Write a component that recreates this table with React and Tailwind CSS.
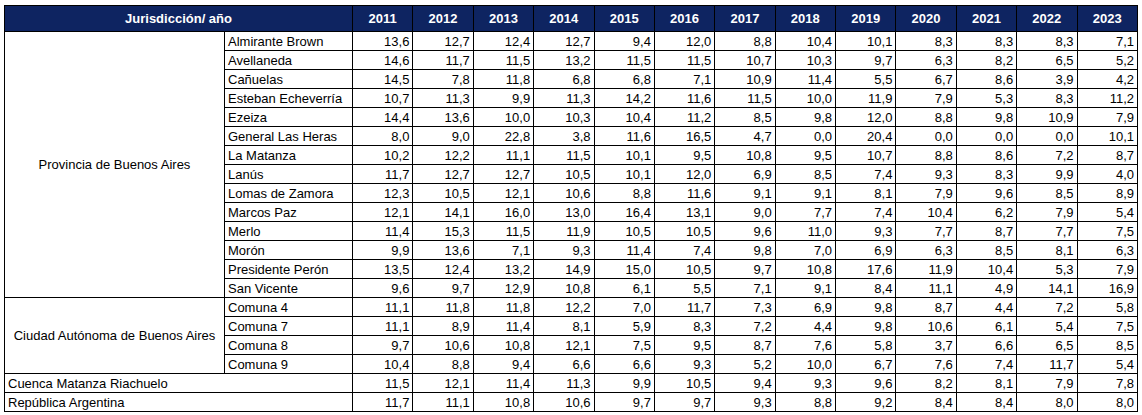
import React from "react";

const years = ["2011", "2012", "2013", "2014", "2015", "2016", "2017", "2018", "2019", "2020", "2021", "2022", "2023"];

const provincia = [
  ["Almirante Brown", "13,6 12,7 12,4 12,7 9,4 12,0 8,8 10,4 10,1 8,3 8,3 8,3 7,1"],
  ["Avellaneda", "14,6 11,7 11,5 13,2 11,5 11,5 10,7 10,3 9,7 6,3 8,2 6,5 5,2"],
  ["Cañuelas", "14,5 7,8 11,8 6,8 6,8 7,1 10,9 11,4 5,5 6,7 8,6 3,9 4,2"],
  ["Esteban Echeverría", "10,7 11,3 9,9 11,3 14,2 11,6 11,5 10,0 11,9 7,9 5,3 8,3 11,2"],
  ["Ezeiza", "14,4 13,6 10,0 10,3 10,4 11,2 8,5 9,8 12,0 8,8 9,8 10,9 7,9"],
  ["General Las Heras", "8,0 9,0 22,8 3,8 11,6 16,5 4,7 0,0 20,4 0,0 0,0 0,0 10,1"],
  ["La Matanza", "10,2 12,2 11,1 11,5 10,1 9,5 10,8 9,5 10,7 8,8 8,6 7,2 8,7"],
  ["Lanús", "11,7 12,7 12,7 10,5 10,1 12,0 6,9 8,5 7,4 9,3 8,3 9,9 4,0"],
  ["Lomas de Zamora", "12,3 10,5 12,1 10,6 8,8 11,6 9,1 9,1 8,1 7,9 9,6 8,5 8,9"],
  ["Marcos Paz", "12,1 14,1 16,0 13,0 16,4 13,1 9,0 7,7 7,4 10,4 6,2 7,9 5,4"],
  ["Merlo", "11,4 15,3 11,5 11,9 10,5 10,5 9,6 11,0 9,3 7,7 8,7 7,7 7,5"],
  ["Morón", "9,9 13,6 7,1 9,3 11,4 7,4 9,8 7,0 6,9 6,3 8,5 8,1 6,3"],
  ["Presidente Perón", "13,5 12,4 13,2 14,9 15,0 10,5 9,7 10,8 17,6 11,9 10,4 5,3 7,9"],
  ["San Vicente", "9,6 9,7 12,9 10,8 6,1 5,5 7,1 9,1 8,4 11,1 4,9 14,1 16,9"],
];

const caba = [
  ["Comuna 4", "11,1 11,8 11,8 12,2 7,0 11,7 7,3 6,9 9,8 8,7 4,4 7,2 5,8"],
  ["Comuna 7", "11,1 8,9 11,4 8,1 5,9 8,3 7,2 4,4 9,8 10,6 6,1 5,4 7,5"],
  ["Comuna 8", "9,7 10,6 10,8 12,1 7,5 9,5 8,7 7,6 5,8 3,7 6,6 6,5 8,5"],
  ["Comuna 9", "10,4 8,8 9,4 6,6 6,6 9,3 5,2 10,0 6,7 7,6 7,4 11,7 5,4"],
];

const totals = [
  ["Cuenca Matanza Riachuelo", "11,5 12,1 11,4 11,3 9,9 10,5 9,4 9,3 9,6 8,2 8,1 7,9 7,8"],
  ["República Argentina", "11,7 11,1 10,8 10,6 9,7 9,7 9,3 8,8 9,2 8,4 8,4 8,0 8,0"],
];

const cell = "border border-black h-[19px] p-0 leading-none";

function Values({ values }) {
  return values.split(" ").map((v, i) => (
    <td key={i} className={`${cell} text-right pr-[3px]`}>{v}</td>
  ));
}

function Group({ name, rows }) {
  return rows.map(([label, values], i) => (
    <tr key={label}>
      {i === 0 && (
        <td rowSpan={rows.length} className="border border-black p-0 text-center align-middle">
          {name}
        </td>
      )}
      <td className={`${cell} pl-[3px]`}>{label}</td>
      <Values values={values} />
    </tr>
  ));
}

export default function App() {
  return (
    <div className="bg-white w-[1142px] h-[415px] pt-[5px] pl-[4px] font-['Liberation_Sans',Arial,sans-serif] text-[13px] text-black">
      <table className="border-collapse table-fixed w-[1134px]">
        <colgroup>
          <col className="w-[220px]" />
          <col className="w-[128px]" />
          {years.map((y) => <col key={y} />)}
        </colgroup>
        <thead>
          <tr className="bg-[#0e2461] text-white font-bold">
            <th colSpan={2} className="border border-black h-[26px] p-0 font-bold">Jurisdicción/ año</th>
            {years.map((y) => (
              <th key={y} className="border border-black h-[26px] p-0 font-bold">{y}</th>
            ))}
          </tr>
        </thead>
        <tbody>
          <Group name="Provincia de Buenos Aires" rows={provincia} />
          <Group name="Ciudad Autónoma de Buenos Aires" rows={caba} />
          {totals.map(([label, values]) => (
            <tr key={label}>
              <td colSpan={2} className={`${cell} pl-[3px]`}>{label}</td>
              <Values values={values} />
            </tr>
          ))}
        </tbody>
      </table>
    </div>
  );
}
